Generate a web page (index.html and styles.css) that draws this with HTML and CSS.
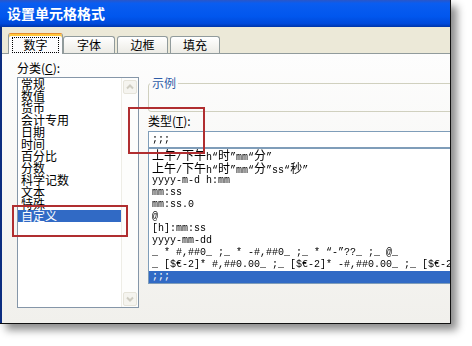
FILE: index.html
```html
<!DOCTYPE html>
<html lang="zh">
<head>
<meta charset="utf-8">
<title>设置单元格格式</title>
<link rel="stylesheet" href="styles.css">
</head>
<body>
<div class="win">
  <div class="title">设置单元格格式</div>
  <div class="body">
    <div class="tabs">
      <div class="tab active"><span class="focus">数字</span></div>
      <div class="tab t2">字体</div>
      <div class="tab t3">边框</div>
      <div class="tab t4">填充</div>
    </div>
    <div class="panel">
      <div class="left">
        <div class="lbl">分类(<u>C</u>):</div>
        <div class="catlist">
          <div class="items">
            <div class="it">常规</div>
            <div class="it">数值</div>
            <div class="it">货币</div>
            <div class="it">会计专用</div>
            <div class="it">日期</div>
            <div class="it">时间</div>
            <div class="it">百分比</div>
            <div class="it">分数</div>
            <div class="it">科学记数</div>
            <div class="it">文本</div>
            <div class="it">特殊</div>
            <div class="it sel">自定义</div>
          </div>
          <div class="sb">
            <div class="sbtn"><svg width="14" height="14" viewBox="0 0 14 14"><path d="M4 8.5 L7 5.5 L10 8.5" fill="none" stroke="#cfcdc2" stroke-width="2"/></svg></div>
            <div class="sbtn"><svg width="14" height="14" viewBox="0 0 14 14"><path d="M4 5.5 L7 8.5 L10 5.5" fill="none" stroke="#cfcdc2" stroke-width="2"/></svg></div>
          </div>
        </div>
      </div>
      <div class="right">
        <fieldset class="sample"><legend>示例</legend><div class="sample-body"></div></fieldset>
        <div class="lbl type-lbl">类型(<u>T</u>):</div>
        <div class="input"><span class="gray">;;;</span></div>
        <div class="typelist">
          <div class="row r13"><span class="gray"><span class="c">上午</span>/<span class="c">下午</span>h“<span class="c">时</span>”mm“<span class="c">分</span>”</span></div>
          <div class="row r13"><span class="gray"><span class="c">上午</span>/<span class="c">下午</span>h“<span class="c">时</span>”mm“<span class="c">分</span>”ss“<span class="c">秒</span>”</span></div>
          <div class="row"><span class="gray">yyyy-m-d h:mm</span></div>
          <div class="row"><span class="gray">mm:ss</span></div>
          <div class="row"><span class="gray">mm:ss.0</span></div>
          <div class="row"><span class="gray">@</span></div>
          <div class="row"><span class="gray">[h]:mm:ss</span></div>
          <div class="row"><span class="gray">yyyy-mm-dd</span></div>
          <div class="row"><span class="gray">_ * #,##0_ ;_ * -#,##0_ ;_ * “-”??_ ;_ @_ </span></div>
          <div class="row"><span class="gray">_ [$€-2]* #,##0.00_ ;_ [$€-2]* -#,##0.00_ ;_ [$€-2]* “-”??_ ;_ @_ </span></div>
          <div class="row sel">;;;</div>
        </div>
      </div>
    </div>
  </div>
  <div class="mark m1"></div>
  <div class="mark m2"></div>
</div>
</body>
</html>
```
FILE: styles.css
```css
html, body {
  margin: 0;
  padding: 0;
  background: #ffffff;
}
body {
  width: 472px;
  height: 346px;
  overflow: hidden;
  font-family: "Noto Sans CJK SC", "Liberation Sans", sans-serif;
}
.win {
  position: relative;
  width: 451px;
  height: 324px;
  box-sizing: border-box;
  border-right: 1px solid #111;
  border-bottom: 1px solid #111;
  overflow: hidden;
  box-shadow: 6px 6px 8px rgba(0, 0, 0, 0.45);
  background: #ece9d8;
}
.title {
  height: 27px;
  line-height: 27px;
  padding-left: 7px;
  color: #fff;
  font-weight: bold;
  font-size: 14px;
  background: linear-gradient(#2a56c8 0%, #0a5df0 12%, #0157ee 60%, #0049da 88%, #0034a8 100%);
}
.body {
  border-left: 2px solid #0c2d80;
  height: 296px;
}
.tabs {
  height: 26px;
  display: flex;
  align-items: flex-end;
  padding-left: 6px;
  font-size: 12px;
}
.tab {
  box-sizing: border-box;
  height: 17px;
  line-height: 16px;
  text-align: center;
  border: 1px solid #919b9c;
  border-bottom: 0;
  border-radius: 3px 3px 0 0;
  background: linear-gradient(#ffffff, #ecebe5);
  color: #000;
}
.tab.active {
  position: relative;
  z-index: 1;
  width: 55px;
  height: 21px;
  margin-bottom: -1px;
  border-top-color: #e68b2c;
  box-shadow: inset 0 2px 0 #ffc83c;
  background: #fcfcfe;
}
.focus {
  display: block;
  margin: 3px 3px 0;
  height: 16px;
  box-sizing: border-box;
  border: 1px dotted #000;
  line-height: 14px;
}
.t2 { width: 52px; margin-right: 2px; }
.t3 { width: 51px; margin-right: 2px; }
.t4 { width: 50px; }
.panel {
  box-sizing: border-box;
  height: 270px;
  border-top: 1px solid #919b9c;
  background: linear-gradient(#fdfdfd, #f1f0ec);
  display: flex;
  padding: 8px 0 0 15px;
}
.left {
  width: 122px;
  flex: none;
}
.lbl {
  font-size: 12px;
  line-height: 12px;
  height: 12px;
  color: #000;
}
.lbl u {
  text-decoration: underline;
}
.catlist {
  margin-top: 3px;
  height: 231px;
  box-sizing: border-box;
  border: 1px solid #8596a8;
  background: #fff;
  display: flex;
}
.items {
  width: 103px;
  flex: none;
}
.it {
  height: 12px;
  line-height: 12px;
  font-size: 12px;
  padding-left: 3px;
  color: #000;
  white-space: nowrap;
}
.it.sel {
  background: #316ac5;
  color: #fff;
}
.sb {
  flex: 1;
  border-left: 1px solid #eeede6;
  background: #fdfdfc;
  display: flex;
  flex-direction: column;
  justify-content: space-between;
  padding: 2px 0 1px 1px;
}
.sbtn {
  width: 14px;
  height: 14px;
  box-sizing: border-box;
  border: 1px solid #e6e4da;
  border-radius: 2px;
  background: #f5f4ef;
  display: flex;
  align-items: center;
  justify-content: center;
}
.sbtn svg {
  display: block;
  margin: -1px;
}
.right {
  width: 330px;
  flex: none;
  margin-left: 9px;
}
.sample {
  margin: 15px 0 0;
  padding: 0;
  border: 1px solid #d0d0bf;
  border-radius: 3px;
  min-width: 0;
}
.sample legend {
  padding: 0 2px;
  margin-left: 1px;
  font-size: 12px;
  line-height: 12px;
  color: #2e5ca8;
}
.sample-body {
  height: 22px;
}
.type-lbl {
  margin-top: 3px;
}
.input {
  margin-top: 4px;
  height: 17px;
  box-sizing: border-box;
  border: 1px solid #7f9db9;
  background: #fff;
  padding-left: 3px;
  font-family: "Liberation Mono", monospace;
  font-size: 10px;
  line-height: 15px;
}
.typelist {
  height: 136px;
  box-sizing: border-box;
  border: 1px solid #7f9db9;
  background: #fff;
  font-family: "Liberation Mono", "Noto Sans CJK SC", monospace;
  font-size: 10px;
}
.gray {
  filter: grayscale(1);
}
.row {
  height: 12px;
  line-height: 12px;
  padding-left: 3px;
  white-space: pre;
  color: #000;
}
.row.r13 {
  height: 13px;
  line-height: 13px;
}
.row .c {
  font-family: "Noto Sans CJK SC", sans-serif;
  font-size: 12px;
  line-height: 12px;
}
.row.sel {
  background: #316ac5;
  color: #fff;
}
.mark {
  position: absolute;
  box-sizing: border-box;
  border: 2px solid #b02e30;
}
.m1 {
  left: 12px;
  top: 205px;
  width: 116px;
  height: 32px;
}
.m2 {
  left: 128px;
  top: 107px;
  width: 77px;
  height: 47px;
}
```
